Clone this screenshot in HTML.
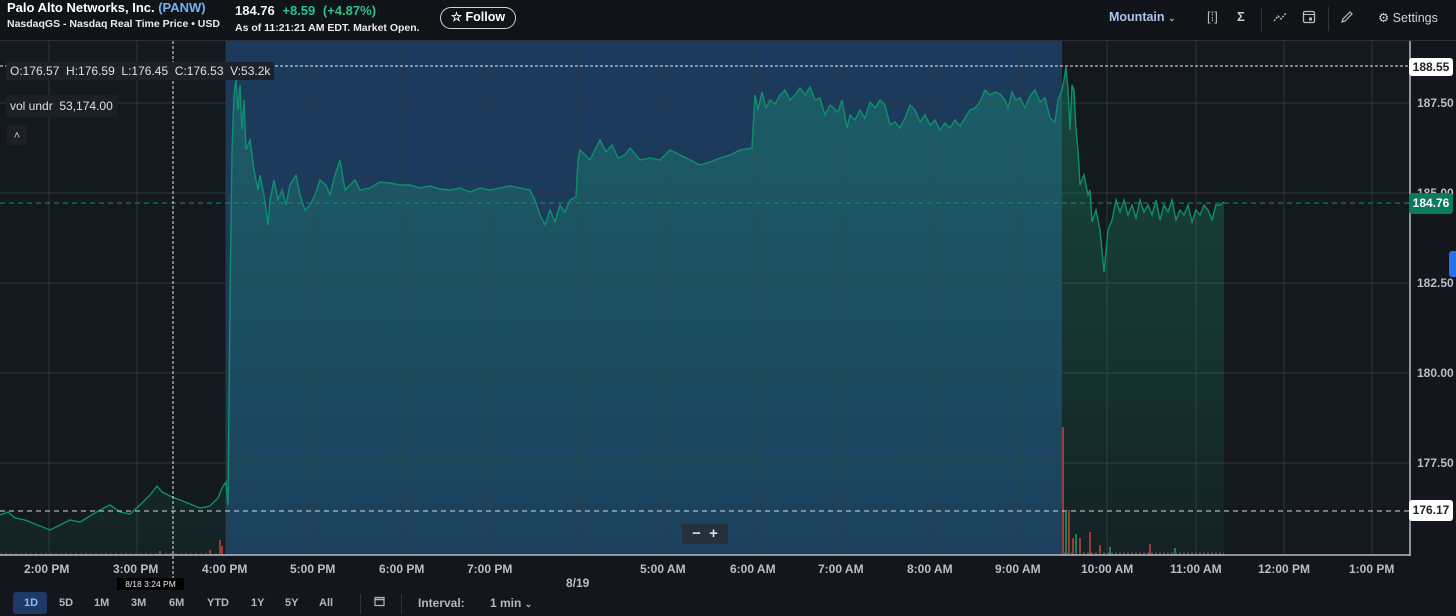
<!DOCTYPE html>
<html><head><meta charset="utf-8">
<style>
*{margin:0;padding:0;box-sizing:border-box}
body{width:1456px;height:616px;background:#13171d;font-family:"Liberation Sans",sans-serif;color:#e6e8eb;position:relative;overflow:hidden}
.a{position:absolute;white-space:nowrap}
.hdr{position:absolute;left:0;top:0;width:1456px;height:41px;background:#101318;border-bottom:1px solid #2c3139}
.ax{font-size:12px;color:#b9bfc7;font-weight:bold}
.yl{font-size:12px;color:#b9bfc7;font-weight:bold;left:1417px}
.bt{font-size:11px;color:#aeb7c4;font-weight:bold;top:597px}
</style></head><body>
<div class="hdr"></div>
<div class="a" style="left:7px;top:0px;font-size:13px;font-weight:bold;color:#fff">Palo Alto Networks, Inc. <span style="color:#6fb3f5">(PANW)</span></div>
<div class="a" style="left:7px;top:18px;font-size:10.5px;font-weight:bold;color:#e8eaed">NasdaqGS - Nasdaq Real Time Price • USD</div>
<div class="a" style="left:235px;top:3px;font-size:13px;font-weight:bold;color:#f2f2f2">184.76 <span style="color:#2ec28b;margin-left:4px">+8.59</span> <span style="color:#2ec28b;margin-left:4px">(+4.87%)</span></div>
<div class="a" style="left:235px;top:22px;font-size:10.5px;font-weight:bold;color:#e8eaed">As of 11:21:21 AM EDT. Market Open.</div>
<div class="a" style="left:440px;top:7px;width:76px;height:22px;border:1.5px solid #d0d4da;border-radius:11px;font-size:12.5px;font-weight:bold;color:#fff;text-align:center;line-height:19px">☆ Follow</div>
<div class="a" style="left:1109px;top:10px;font-size:12.5px;font-weight:bold;color:#a9c6ea">Mountain <span style="font-size:9px;color:#aaa">⌄</span></div>
<div class="a" style="left:1207px;top:9px;font-size:13px;color:#bbb">[⁞]</div>
<div class="a" style="left:1237px;top:9px;font-size:13px;color:#ccc;font-weight:bold">Σ</div>
<div class="a" style="left:1261px;top:7px;width:1px;height:24px;background:#333"></div>
<svg class="a" style="left:1272px;top:10px" width="16" height="14"><path d="M2 11 L6 6 L9 9 L14 3" stroke="#bbb" stroke-width="1.4" fill="none" stroke-dasharray="2 1.2"/></svg>
<svg class="a" style="left:1302px;top:9px" width="14" height="15"><rect x="1.5" y="2.5" width="11" height="11" rx="1.5" stroke="#bbb" fill="none" stroke-width="1.3"/><line x1="1.5" y1="5.5" x2="12.5" y2="5.5" stroke="#bbb"/><rect x="7" y="8.5" width="3" height="3" fill="#bbb"/></svg>
<div class="a" style="left:1328px;top:7px;width:1px;height:24px;background:#333"></div>
<svg class="a" style="left:1340px;top:10px" width="14" height="14"><path d="M2 12 L3 9 L10 2 L12 4 L5 11 Z" stroke="#bbb" fill="none" stroke-width="1.2"/></svg>
<div class="a" style="left:1378px;top:10px;font-size:12.5px;color:#cfd3d8">⚙ Settings</div>

<svg class="a" style="left:0;top:41px" width="1456" height="575">
<defs>
<linearGradient id="g" x1="0" y1="0" x2="0" y2="1"><stop offset="0" stop-color="#1aa07a" stop-opacity="0.35"/><stop offset="1" stop-color="#1aa07a" stop-opacity="0.06"/></linearGradient>
</defs>
<rect x="0" y="0" width="1410" height="514" fill="#141920"/>
<rect x="226" y="0" width="836" height="514" fill="#1c3a5b"/>
<g stroke="#2e353f" stroke-width="1">
<line x1="49" y1="0" x2="49" y2="514"/><line x1="137" y1="0" x2="137" y2="514"/><line x1="226" y1="0" x2="226" y2="514"/><line x1="314" y1="0" x2="314" y2="514"/><line x1="403" y1="0" x2="403" y2="514"/><line x1="491" y1="0" x2="491" y2="514"/><line x1="578" y1="0" x2="578" y2="514"/><line x1="666" y1="0" x2="666" y2="514"/><line x1="755" y1="0" x2="755" y2="514"/><line x1="843" y1="0" x2="843" y2="514"/><line x1="932" y1="0" x2="932" y2="514"/><line x1="1020" y1="0" x2="1020" y2="514"/><line x1="1107" y1="0" x2="1107" y2="514"/><line x1="1196" y1="0" x2="1196" y2="514"/><line x1="1284" y1="0" x2="1284" y2="514"/><line x1="1372" y1="0" x2="1372" y2="514"/>
<line x1="0" y1="62" x2="1410" y2="62"/><line x1="0" y1="152" x2="1410" y2="152"/><line x1="0" y1="242" x2="1410" y2="242"/><line x1="0" y1="332" x2="1410" y2="332"/><line x1="0" y1="422" x2="1410" y2="422"/>
</g>
<g transform="translate(0,-41)">
<path d="M0,515 L8,512 15,518 25,520 40,526 50,530 60,525 70,520 80,522 90,516 100,510 110,505 120,512 130,514 140,505 150,495 157,486 162,492 170,496 180,500 190,504 200,508 210,506 218,498 222,488 226,482 228,505 230,300 232,150 234,95 236,80 238,110 240,85 242,130 244,100 246,150 250,140 254,170 258,190 260,175 264,195 268,225 270,200 274,180 278,200 282,190 286,205 290,185 296,175 300,195 305,210 310,205 315,195 320,180 326,185 330,195 335,175 340,160 345,190 350,185 355,180 360,190 370,188 380,182 390,183 400,185 410,185 420,188 430,186 440,189 450,190 460,188 470,192 480,188 490,190 500,188 510,186 520,188 530,190 535,200 540,215 545,225 550,210 555,222 560,205 565,212 570,200 576,197 578,160 580,150 585,155 590,160 595,150 600,140 606,152 612,145 618,158 625,155 630,148 640,160 650,158 660,160 670,150 680,155 690,160 700,165 710,162 720,158 730,155 740,150 752,148 755,95 758,110 762,92 766,108 770,100 775,104 780,95 785,90 790,100 795,95 800,88 805,95 810,87 815,100 820,98 825,115 830,105 838,112 842,100 847,128 850,115 855,120 860,110 865,118 870,102 875,108 880,100 885,105 890,125 895,122 900,128 905,118 910,105 915,110 920,122 925,115 930,125 935,120 940,130 945,123 950,128 955,120 960,126 965,118 970,110 975,108 980,102 985,90 990,95 995,92 1000,94 1005,100 1008,108 1012,92 1016,100 1020,98 1025,108 1030,96 1035,90 1040,102 1045,98 1050,118 1055,122 1058,100 1060,95 1062,90 1064,80 1066,67 1068,90 1070,130 1072,85 1074,90 1076,130 1078,150 1080,185 1084,175 1088,195 1090,190 1092,222 1096,210 1100,230 1104,272 1108,230 1112,220 1116,200 1120,212 1124,200 1128,215 1132,205 1136,218 1140,200 1144,212 1148,205 1152,215 1156,200 1160,220 1164,205 1168,212 1172,200 1176,220 1180,210 1184,215 1188,205 1192,222 1196,210 1200,215 1204,205 1208,210 1212,220 1216,205 1220,205 1224,202 L1224,555 L0,555 Z" fill="url(#g)" stroke="none"/>
<path d="M0,515 L8,512 15,518 25,520 40,526 50,530 60,525 70,520 80,522 90,516 100,510 110,505 120,512 130,514 140,505 150,495 157,486 162,492 170,496 180,500 190,504 200,508 210,506 218,498 222,488 226,482 228,505 230,300 232,150 234,95 236,80 238,110 240,85 242,130 244,100 246,150 250,140 254,170 258,190 260,175 264,195 268,225 270,200 274,180 278,200 282,190 286,205 290,185 296,175 300,195 305,210 310,205 315,195 320,180 326,185 330,195 335,175 340,160 345,190 350,185 355,180 360,190 370,188 380,182 390,183 400,185 410,185 420,188 430,186 440,189 450,190 460,188 470,192 480,188 490,190 500,188 510,186 520,188 530,190 535,200 540,215 545,225 550,210 555,222 560,205 565,212 570,200 576,197 578,160 580,150 585,155 590,160 595,150 600,140 606,152 612,145 618,158 625,155 630,148 640,160 650,158 660,160 670,150 680,155 690,160 700,165 710,162 720,158 730,155 740,150 752,148 755,95 758,110 762,92 766,108 770,100 775,104 780,95 785,90 790,100 795,95 800,88 805,95 810,87 815,100 820,98 825,115 830,105 838,112 842,100 847,128 850,115 855,120 860,110 865,118 870,102 875,108 880,100 885,105 890,125 895,122 900,128 905,118 910,105 915,110 920,122 925,115 930,125 935,120 940,130 945,123 950,128 955,120 960,126 965,118 970,110 975,108 980,102 985,90 990,95 995,92 1000,94 1005,100 1008,108 1012,92 1016,100 1020,98 1025,108 1030,96 1035,90 1040,102 1045,98 1050,118 1055,122 1058,100 1060,95 1062,90 1064,80 1066,67 1068,90 1070,130 1072,85 1074,90 1076,130 1078,150 1080,185 1084,175 1088,195 1090,190 1092,222 1096,210 1100,230 1104,272 1108,230 1112,220 1116,200 1120,212 1124,200 1128,215 1132,205 1136,218 1140,200 1144,212 1148,205 1152,215 1156,200 1160,220 1164,205 1168,212 1172,200 1176,220 1180,210 1184,215 1188,205 1192,222 1196,210 1200,215 1204,205 1208,210 1212,220 1216,205 1220,205 1224,202" fill="none" stroke="#0e8f6e" stroke-width="1.4"/>
<g stroke-width="1.5">
<line x1="1063" y1="555" x2="1063" y2="427" stroke="#c0493a"/>
<line x1="1066" y1="555" x2="1066" y2="512" stroke="#1aa070"/>
<line x1="1069" y1="555" x2="1069" y2="510" stroke="#c0493a"/>
<line x1="1073" y1="555" x2="1073" y2="538" stroke="#c0493a"/>
<line x1="1076" y1="555" x2="1076" y2="534" stroke="#1aa070"/>
<line x1="1080" y1="555" x2="1080" y2="538" stroke="#c0493a"/>
<line x1="1090" y1="555" x2="1090" y2="532" stroke="#c0493a"/>
<line x1="1100" y1="555" x2="1100" y2="545" stroke="#c0493a"/>
<line x1="1110" y1="555" x2="1110" y2="547" stroke="#1aa070"/>
<line x1="1150" y1="555" x2="1150" y2="544" stroke="#c0493a"/>
<line x1="1175" y1="555" x2="1175" y2="548" stroke="#1aa070"/>
<line x1="220" y1="555" x2="220" y2="540" stroke="#c0493a"/>
<line x1="222" y1="555" x2="222" y2="546" stroke="#c0493a"/>
<line x1="210" y1="555" x2="210" y2="550" stroke="#c0493a"/>
<line x1="160" y1="555" x2="160" y2="551" stroke="#c0493a"/>
</g>
<path d="M1063,554 H1224" stroke="#6d4540" stroke-width="3" stroke-dasharray="2 2"/>
<path d="M0,554 H225" stroke="#4a4040" stroke-width="2" stroke-dasharray="2 3"/>
<line x1="0" y1="66" x2="1410" y2="66" stroke="#e8e8e8" stroke-width="1" stroke-dasharray="3 2"/>
<line x1="0" y1="511" x2="1410" y2="511" stroke="#d8d8d8" stroke-width="1" stroke-dasharray="5 4"/>
<line x1="0" y1="203" x2="1410" y2="203" stroke="#1a8a6a" stroke-width="1" stroke-dasharray="5 4"/>
<line x1="173" y1="41" x2="173" y2="578" stroke="#e8e8e8" stroke-width="1" stroke-dasharray="3 2"/>
<line x1="1410" y1="41" x2="1410" y2="556" stroke="#b8bec6" stroke-width="1.5"/>
<line x1="0" y1="555" x2="1410" y2="555" stroke="#b8bec6" stroke-width="1.5"/>
</g>
</svg>

<div class="a" style="left:6px;top:62px;height:18px;padding:0 4px;background:#1d222a;font-size:12px;color:#dde1e6;line-height:18px">O:176.57&nbsp; H:176.59&nbsp; L:176.45&nbsp; C:176.53&nbsp; V:53.2k</div>
<div class="a" style="left:6px;top:95px;height:22px;padding:0 4px;background:#1b2027;font-size:12px;color:#dde1e6;line-height:22px">vol undr&nbsp; 53,174.00</div>
<div class="a" style="left:7px;top:125px;width:20px;height:20px;background:#1b2027;color:#ccc;font-size:11px;text-align:center;line-height:22px">˄</div>
<div class="a" style="left:682px;top:524px;width:46px;height:20px;background:#25303c;color:#ddd;font-size:15px;font-weight:bold;line-height:20px;text-align:center">−&nbsp;&nbsp;+</div>

<div class="a" style="left:1409px;top:58px;width:44px;height:18px;background:#fff;border-radius:3px;color:#222;font-size:12px;font-weight:bold;text-align:center;line-height:18px">188.55</div>
<div class="a yl" style="top:96px">187.50</div>
<div class="a yl" style="top:186px">185.00</div>
<div class="a" style="left:1409px;top:193px;width:44px;height:21px;background:#0b7a5e;border-radius:3px;color:#fff;font-size:12px;font-weight:bold;text-align:center;line-height:21px">184.76</div>
<div class="a" style="left:1449px;top:251px;width:7px;height:26px;background:#2672e8;border-radius:3px 0 0 3px"></div>
<div class="a yl" style="top:276px">182.50</div>
<div class="a yl" style="top:366px">180.00</div>
<div class="a yl" style="top:456px">177.50</div>
<div class="a" style="left:1409px;top:500px;width:44px;height:21px;background:#fff;border-radius:3px;color:#222;font-size:12px;font-weight:bold;text-align:center;line-height:21px">176.17</div>

<div class="a ax" style="left:24px;top:562px">2:00 PM</div>
<div class="a ax" style="left:113px;top:562px">3:00 PM</div>
<div class="a ax" style="left:202px;top:562px">4:00 PM</div>
<div class="a ax" style="left:290px;top:562px">5:00 PM</div>
<div class="a ax" style="left:379px;top:562px">6:00 PM</div>
<div class="a ax" style="left:467px;top:562px">7:00 PM</div>
<div class="a ax" style="left:566px;top:576px">8/19</div>
<div class="a ax" style="left:640px;top:562px">5:00 AM</div>
<div class="a ax" style="left:730px;top:562px">6:00 AM</div>
<div class="a ax" style="left:818px;top:562px">7:00 AM</div>
<div class="a ax" style="left:907px;top:562px">8:00 AM</div>
<div class="a ax" style="left:995px;top:562px">9:00 AM</div>
<div class="a ax" style="left:1081px;top:562px">10:00 AM</div>
<div class="a ax" style="left:1170px;top:562px">11:00 AM</div>
<div class="a ax" style="left:1258px;top:562px">12:00 PM</div>
<div class="a ax" style="left:1349px;top:562px">1:00 PM</div>
<div class="a" style="left:117px;top:578px;width:67px;height:12px;background:#000;color:#eee;font-size:8.5px;text-align:center;line-height:12px">8/18 3:24 PM</div>

<div class="a" style="left:13px;top:592px;width:34px;height:22px;background:#1f3966;border-radius:3px"></div>
<div class="a bt" style="left:24px;color:#8fb8ff">1D</div>
<div class="a bt" style="left:59px">5D</div>
<div class="a bt" style="left:94px">1M</div>
<div class="a bt" style="left:131px">3M</div>
<div class="a bt" style="left:169px">6M</div>
<div class="a bt" style="left:207px">YTD</div>
<div class="a bt" style="left:251px">1Y</div>
<div class="a bt" style="left:285px">5Y</div>
<div class="a bt" style="left:319px">All</div>
<div class="a" style="left:360px;top:594px;width:1px;height:20px;background:#333"></div>
<svg class="a" style="left:374px;top:596px" width="11" height="11"><rect x="1" y="1.5" width="9" height="8" stroke="#aeb7c4" fill="none" stroke-width="1.2"/><line x1="1" y1="3.5" x2="10" y2="3.5" stroke="#aeb7c4" stroke-width="1.5"/></svg>
<div class="a" style="left:401px;top:594px;width:1px;height:20px;background:#333"></div>
<div class="a bt" style="left:418px;font-size:12px;top:596px">Interval:</div>
<div class="a bt" style="left:490px;font-size:12px;top:596px">1 min <span style="font-size:9px">⌄</span></div>
</body></html>
